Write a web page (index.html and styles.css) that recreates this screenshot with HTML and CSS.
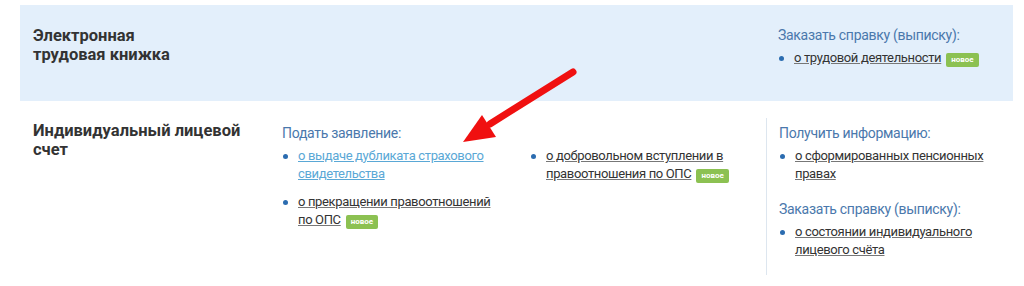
FILE: index.html
```html
<!DOCTYPE html>
<html lang="ru">
<head>
    <meta charset="UTF-8">
    <title>Сервисы</title>
    <link rel="stylesheet" href="styles.css">
</head>
<body>
    <div class="page">
        <div class="section section-blue">
            <h3 class="title">Электронная<br>трудовая книжка</h3>
            <div class="col"></div>
            <div class="col"></div>
            <div class="col col-last">
                <div class="group">
                    <div class="group-head">Заказать справку (выписку):</div>
                    <ul>
                        <li><a href="#">о трудовой деятельности</a><span class="badge">новое</span></li>
                    </ul>
                </div>
            </div>
        </div>

        <div class="section">
            <h3 class="title">Индивидуальный лицевой счет</h3>
            <div class="col">
                <div class="group">
                    <div class="group-head">Подать заявление:</div>
                    <ul>
                        <li><a href="#" class="visited">о выдаче дубликата страхового свидетельства</a></li>
                        <li><a href="#">о прекращении правоотношений по ОПС</a><span class="badge">новое</span></li>
                    </ul>
                </div>
            </div>
            <div class="col">
                <div class="group">
                    <div class="group-head">&nbsp;</div>
                    <ul>
                        <li><a href="#">о добровольном вступлении в правоотношения по ОПС</a><span class="badge">новое</span></li>
                    </ul>
                </div>
            </div>
            <div class="col col-last divided">
                <div class="group">
                    <div class="group-head">Получить информацию:</div>
                    <ul>
                        <li><a href="#">о сформированных пенсионных правах</a></li>
                    </ul>
                </div>
                <div class="group">
                    <div class="group-head">Заказать справку (выписку):</div>
                    <ul>
                        <li><a href="#">о состоянии индивидуального лицевого счёта</a></li>
                    </ul>
                </div>
            </div>
        </div>

        <svg class="arrow" width="1024" height="286" viewBox="0 0 1024 286">
            <line x1="573" y1="72" x2="490" y2="124" stroke="#f01010" stroke-width="7" stroke-linecap="round"/>
            <polygon points="463,142 482,115 496,137" fill="#f01010"/>
        </svg>
    </div>
</body>
</html>
```

FILE: styles.css
```css
body {
    margin: 0;
    background: #fff;
    font-family: Roboto, "Liberation Sans", sans-serif;
    color: #333;
}
.page {
    position: relative;
    padding: 5px 11px 0 20px;
    height: 281px;
}
.section {
    display: grid;
    grid-template-columns: 249px 248px 236px 1fr;
    padding-left: 13px;
}
.section-blue {
    background: #e3effb;
    height: 96px;
    padding-top: 18px;
    box-sizing: border-box;
}
.section + .section {
    margin-top: 17px;
}
.title {
    margin: 0;
    font-size: 16.5px;
    font-weight: bold;
    line-height: 19px;
    color: #333;
    padding-top: 3px;
}
.section:not(.section-blue) .title {
    padding-right: 10px;
}
.col-last {
    padding-left: 12px;
}
.divided {
    border-left: 1px solid #dde6ef;
    padding-top: 3px;
    height: 157px;
    box-sizing: border-box;
}
.section:not(.section-blue) .col:not(.divided) {
    padding-top: 3px;
}
.group-head {
    font-size: 14px;
    letter-spacing: -0.3px;
    line-height: 18px;
    color: #4a78ac;
    margin-top: 3px;
}
.group + .group {
    margin-top: 17px;
}
ul {
    list-style: none;
    margin: 5px 0 0;
    padding: 0;
}
li {
    position: relative;
    padding-left: 16px;
    font-size: 13px;
    letter-spacing: -0.35px;
    line-height: 18px;
    margin-bottom: 10px;
    padding-right: 26px;
}
li::before {
    content: "";
    position: absolute;
    left: 1px;
    top: 7px;
    width: 5px;
    height: 5px;
    border-radius: 50%;
    background: #2b6cb0;
}
a {
    color: #333;
    text-decoration: underline;
    text-decoration-color: #777;
}
a.visited {
    color: #5aa8d6;
    text-decoration-color: #5aa8d6;
}
.badge {
    display: inline-block;
    margin-left: 5px;
    background: #8cc152;
    color: #fff;
    font-size: 8px;
    font-weight: bold;
    letter-spacing: 0;
    line-height: 14px;
    padding: 0 5px;
    border-radius: 2px;
    vertical-align: 0;
}
.arrow {
    position: absolute;
    left: 0;
    top: 0;
    pointer-events: none;
}
```
